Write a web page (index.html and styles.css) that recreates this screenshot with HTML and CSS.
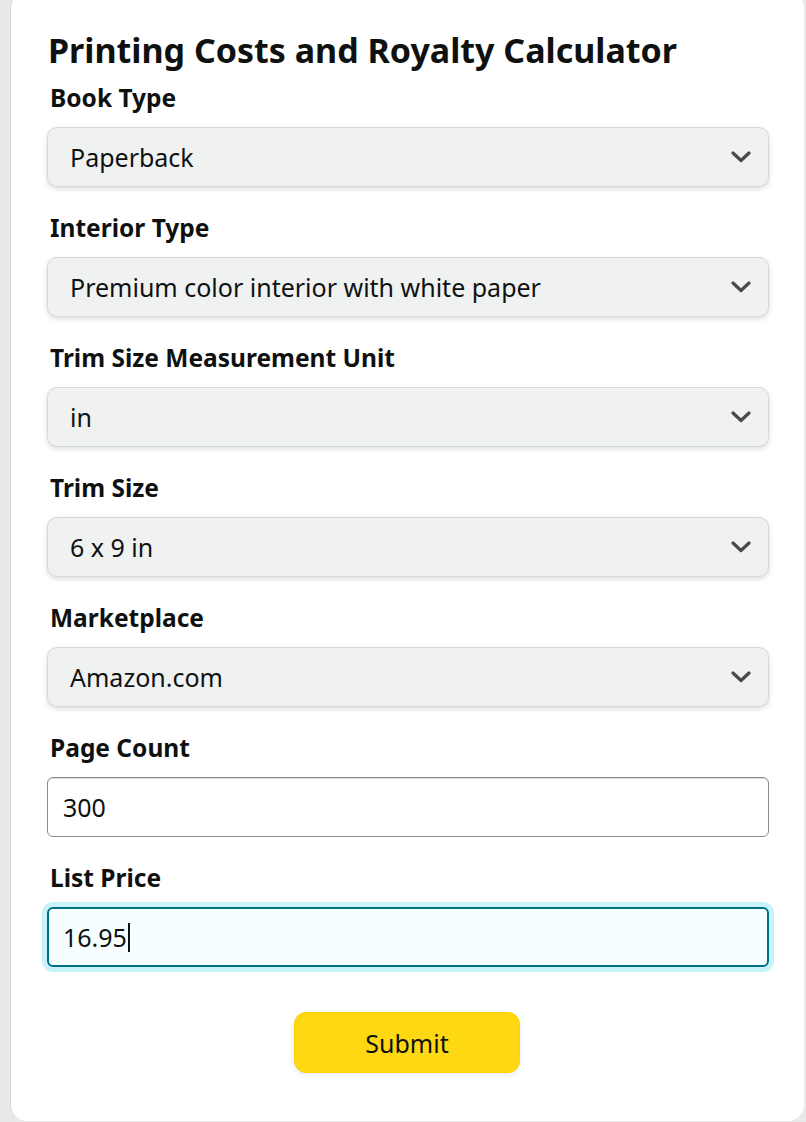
FILE: index.html
```html
<!DOCTYPE html>
<html lang="en">
<head>
<meta charset="utf-8">
<title>Printing Costs and Royalty Calculator</title>
<link rel="stylesheet" href="styles.css">
</head>
<body>
<div class="card">
  <h1 class="title">Printing Costs and Royalty Calculator</h1>
  <form class="form">
    <div class="field">
      <label class="label" for="bt">Book Type</label>
      <div class="select-wrap">
        <select id="bt" class="select"><option>Paperback</option></select>
        <svg class="chev" width="20" height="12" viewBox="0 0 20 12"><path d="M2 2 L10 9.5 L18 2" fill="none" stroke="#4a4a4a" stroke-width="3.2" stroke-linecap="round" stroke-linejoin="round"/></svg>
      </div>
    </div>
    <div class="field">
      <label class="label" for="it">Interior Type</label>
      <div class="select-wrap">
        <select id="it" class="select"><option>Premium color interior with white paper</option></select>
        <svg class="chev" width="20" height="12" viewBox="0 0 20 12"><path d="M2 2 L10 9.5 L18 2" fill="none" stroke="#4a4a4a" stroke-width="3.2" stroke-linecap="round" stroke-linejoin="round"/></svg>
      </div>
    </div>
    <div class="field">
      <label class="label" for="mu">Trim Size Measurement Unit</label>
      <div class="select-wrap">
        <select id="mu" class="select"><option>in</option></select>
        <svg class="chev" width="20" height="12" viewBox="0 0 20 12"><path d="M2 2 L10 9.5 L18 2" fill="none" stroke="#4a4a4a" stroke-width="3.2" stroke-linecap="round" stroke-linejoin="round"/></svg>
      </div>
    </div>
    <div class="field">
      <label class="label" for="ts">Trim Size</label>
      <div class="select-wrap">
        <select id="ts" class="select"><option>6 x 9 in</option></select>
        <svg class="chev" width="20" height="12" viewBox="0 0 20 12"><path d="M2 2 L10 9.5 L18 2" fill="none" stroke="#4a4a4a" stroke-width="3.2" stroke-linecap="round" stroke-linejoin="round"/></svg>
      </div>
    </div>
    <div class="field">
      <label class="label" for="mp">Marketplace</label>
      <div class="select-wrap">
        <select id="mp" class="select"><option>Amazon.com</option></select>
        <svg class="chev" width="20" height="12" viewBox="0 0 20 12"><path d="M2 2 L10 9.5 L18 2" fill="none" stroke="#4a4a4a" stroke-width="3.2" stroke-linecap="round" stroke-linejoin="round"/></svg>
      </div>
    </div>
    <div class="field">
      <label class="label" for="pc">Page Count</label>
      <input id="pc" class="input" type="text" value="300">
    </div>
    <div class="field">
      <label class="label">List Price</label>
      <div class="input input-focus" role="textbox">16.95<span class="caret"></span></div>
    </div>
    <div class="actions">
      <button type="button" class="submit">Submit</button>
    </div>
  </form>
</div>
</body>
</html>
```
FILE: styles.css
```css
* { box-sizing: border-box; }
html, body {
  margin: 0;
  padding: 0;
  background: #e9e9e9;
  height: 1122px;
  overflow: hidden;
}
body {
  font-family: "Noto Sans", "Open Sans", sans-serif;
  color: #0f1111;
}
.card {
  margin: -8px 0 0 10px;
  width: 794px;
  height: 1129px;
  background: #fff;
  border-left: 1px solid #d6d8d8;
  border-radius: 16px;
  padding: 38px 35px 0 36px;
}
.title {
  margin: 0 0 13px 1px;
  font-size: 34px;
  line-height: 40px;
  font-weight: 700;
  letter-spacing: 0;
}
.form {
  display: flex;
  flex-direction: column;
}
.field {
  display: flex;
  flex-direction: column;
  margin-bottom: 26px;
}
.label {
  font-size: 24.5px;
  font-weight: 700;
  line-height: 30px;
  padding-left: 3px;
  margin-bottom: 14px;
}
.select-wrap {
  position: relative;
}
.select {
  appearance: none;
  -webkit-appearance: none;
  width: 100%;
  height: 60px;
  border: 1px solid #d5d9d9;
  border-radius: 10px;
  background: #f0f2f2;
  box-shadow: 0 2px 5px rgba(15, 17, 17, 0.15);
  font-family: inherit;
  font-size: 25px;
  color: #0f1111;
  padding: 0 60px 0 22px;
  outline: none;
}
.chev {
  position: absolute;
  right: 18px;
  top: 24px;
  pointer-events: none;
}
.input {
  width: 100%;
  height: 60px;
  border: 1px solid #888c8c;
  border-radius: 6px;
  background: #fff;
  font-family: inherit;
  font-size: 25px;
  color: #0f1111;
  padding: 0 15px;
  outline: none;
  box-shadow: inset 0 1px 0 rgba(15,17,17,.15);
}
.input-focus {
  display: flex;
  align-items: center;
  border: 2px solid #007185;
  background: #f7feff;
  box-shadow: 0 0 0 5px #c8f3fa;
  padding: 0 14px;
}
.caret {
  display: inline-block;
  width: 2px;
  height: 29px;
  background: #0f1111;
  margin-left: 1px;
}
.actions {
  display: flex;
  justify-content: center;
  margin-top: 19px;
  padding-right: 2px;
}
.submit {
  width: 226px;
  height: 61px;
  border: 1px solid #fcd200;
  border-radius: 12px;
  background: #ffd814;
  box-shadow: 0 2px 5px rgba(213, 217, 217, 0.5);
  font-family: inherit;
  font-size: 25px;
  color: #0f1111;
}
```
